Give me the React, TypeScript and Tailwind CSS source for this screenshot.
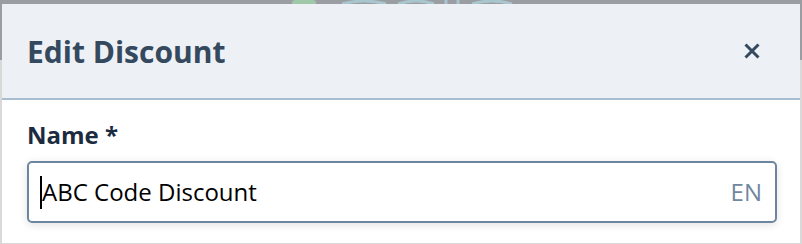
export default function App() {
  return (
    <div className="relative h-[244px] w-[802px] overflow-hidden bg-[#d9d9d9] font-['Open_Sans',sans-serif]">
      <div className="absolute left-0 top-0 h-[60px] w-full bg-[#9a9da1]" />
      <svg className="absolute left-[280px] top-0" width="260" height="6" viewBox="0 0 260 6">
        <rect x="12" y="0" width="24" height="6" rx="3" fill="#9fc9a8" />
        <path d="M62 4 Q84 -2 106 4 M118 4 Q136 -2 154 4 M166 6 V0 M178 6 V0 M192 4 Q212 -2 232 4" stroke="#a9c6cf" strokeWidth="3" fill="none" />
      </svg>
      <div className="relative ml-[2px] mt-[4px] w-[798px] bg-white">
        <div className="flex h-[96px] items-center justify-between border-b-2 border-[#a9bdd0] bg-[#edf0f5] pl-[25px] pr-[40px]">
          <h2 className="text-[30px] font-bold text-[#34495e]">Edit Discount</h2>
          <svg width="16" height="16" viewBox="0 0 16 16" className="text-[#34495e]">
            <path d="M1.5 1.5L14.5 14.5M14.5 1.5L1.5 14.5" stroke="currentColor" strokeWidth="3" />
          </svg>
        </div>
        <div className="px-[25px] pt-[20px] pb-[20px]">
          <label className="block text-[24px] font-bold leading-[30px] text-[#1c2b3f]">Name *</label>
          <div className="mt-[11px] flex h-[62px] w-[750px] items-center rounded-[5px] border-2 border-[#6d86a0] pl-[11px] pr-[13px] shadow-[0_2px_8px_rgba(0,0,0,0.12)]">
            <span className="h-[33px] w-[2px] bg-black" />
            <span className="flex-1 text-[24px] text-black">ABC Code Discount</span>
            <span className="text-[24px] text-[#6f87a0]">EN</span>
          </div>
        </div>
      </div>
    </div>
  );
}
